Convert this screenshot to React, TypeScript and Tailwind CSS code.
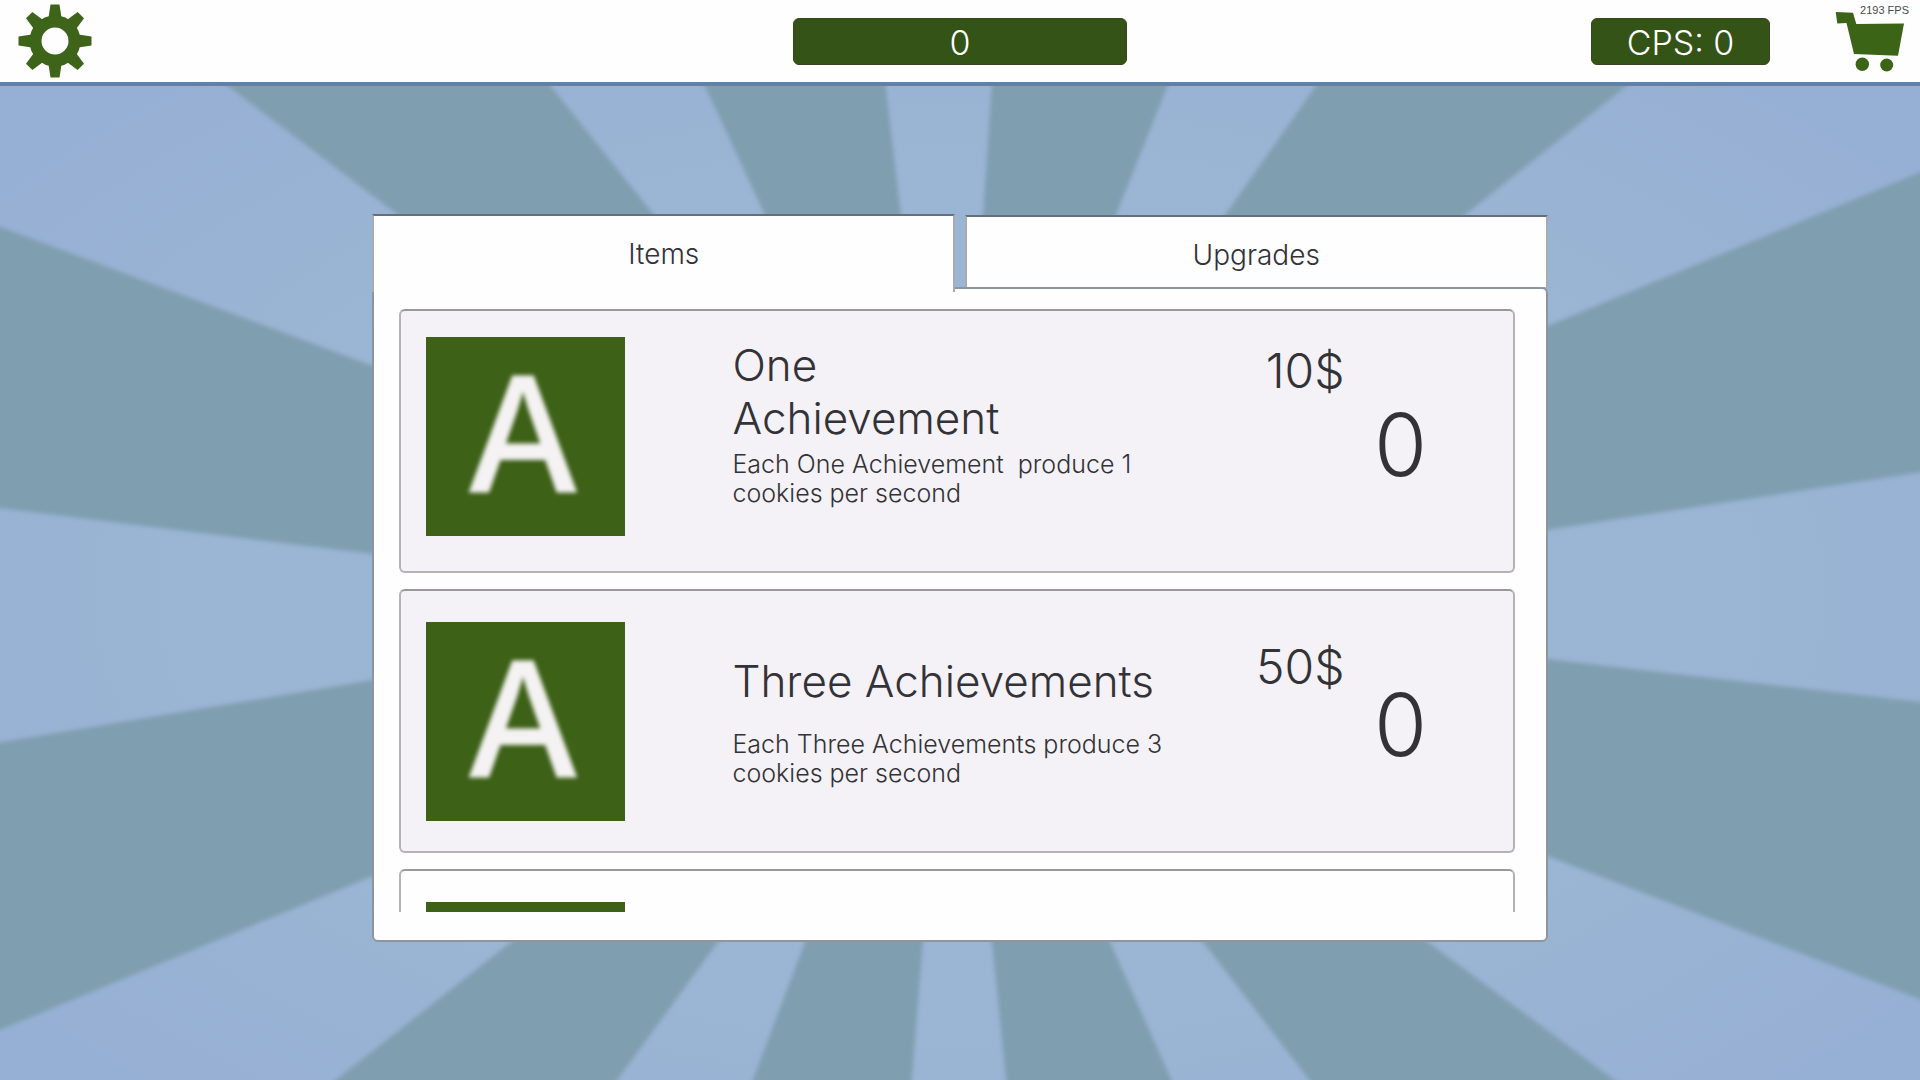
import { useState } from 'react';
import clsx from 'clsx';

type Tab = 'items' | 'upgrades';

interface Item {
  title: string;
  description: string;
  price: number;
  owned: number;
  unlocked: boolean;
  iconClass: string;
  titleClass: string;
  priceClass: string;
}

const items: Item[] = [
  {
    title: 'One\nAchievement',
    description: 'Each One Achievement  produce 1\ncookies per second',
    price: 10,
    owned: 0,
    unlocked: true,
    iconClass: 'mt-[26px]',
    titleClass: 'mt-7',
    priceClass: 'mt-7',
  },
  {
    title: 'Three Achievements',
    description: 'Each Three Achievements produce 3\ncookies per second',
    price: 50,
    owned: 0,
    unlocked: true,
    iconClass: 'mt-[31px]',
    titleClass: 'mt-16',
    priceClass: 'mt-11',
  },
  {
    title: '',
    description: '',
    price: 0,
    owned: 0,
    unlocked: false,
    iconClass: 'mt-[31px]',
    titleClass: 'mt-16',
    priceClass: 'mt-11',
  },
];

// each ray starts at the window edge and ends behind the panel
const rays = [
  '220,80 546,80 654,215 955,640 398,215',
  '702,80 885,80 901,215 950,640 765,215',
  '992,80 1170,80 1116,215 975,640 983,215',
  '1320,80 1634,80 1465,215 970,640 1225,215',
  '-10,223 -10,507 373,554 955,640 373,366',
  '-10,744 -10,1034 373,876 955,640 373,680',
  '1930,168 1930,471 1547,530 955,640 1547,326',
  '1930,703 1930,1003 1547,856 955,640 1547,659',
  '323,1090 610,1090 718,942 955,640 511,942',
  '749,1090 911,1090 923,942 955,640 805,942',
  '1007,1090 1176,1090 1110,942 955,640 992,942',
  '1317,1090 1628,1090 1428,942 955,640 1203,942',
];

function Background() {
  return (
    <svg
      className="absolute inset-0 h-full w-full"
      viewBox="0 0 1920 1080"
      preserveAspectRatio="none"
      aria-hidden="true"
    >
      <defs>
        <radialGradient id="sky" cx="50%" cy="55%" r="65%">
          <stop offset="0%" stopColor="#99b4d2" />
          <stop offset="60%" stopColor="#9bb5d4" />
          <stop offset="100%" stopColor="#96afd4" />
        </radialGradient>
        <filter id="soft">
          <feGaussianBlur stdDeviation="2" />
        </filter>
      </defs>
      <rect width="1920" height="1080" fill="url(#sky)" />
      <g fill="#7f9fb0" filter="url(#soft)">
        {rays.map((points) => (
          <polygon key={points} points={points} />
        ))}
      </g>
    </svg>
  );
}

function GearIcon() {
  return (
    <svg className="h-[78px] w-[78px]" viewBox="-39 -39 78 78" fill="#3d6418" aria-hidden="true">
      {[0, 45, 90, 135, 180, 225, 270, 315].map((angle) => (
        <path key={angle} d="M-7 -20 L-4.5 -36.5 H4.5 L7 -20 Z" transform={`rotate(${angle})`} />
      ))}
      <circle r="19.5" fill="none" stroke="#3d6418" strokeWidth="12" />
    </svg>
  );
}

function CartIcon() {
  return (
    <svg className="h-[60px] w-[70px]" viewBox="0 0 70 60" fill="#3b6417" aria-hidden="true">
      <path d="M1.7 0 L19 0.7 L22.3 12 L70 11.5 L64 43.7 L20 42 L12.5 11 L3.3 11.5 Z" />
      <circle cx="28.3" cy="52.3" r="6.7" />
      <circle cx="52.7" cy="53" r="6.5" />
    </svg>
  );
}

function Header() {
  return (
    <header className="relative grid h-[86px] grid-cols-[1fr_auto_1fr] items-center border-b-4 border-[#5f82ab] bg-[#fefefe] px-4">
      <button type="button" aria-label="Settings" className="justify-self-start">
        <GearIcon />
      </button>
      <div className="flex h-[47px] w-[334px] items-center justify-center rounded-md border border-[#3b4420] bg-[#345317] pt-0.5 text-[34px] text-white">
        0
      </div>
      <div className="flex items-center justify-end">
        <div className="mr-16 flex h-[47px] w-[179px] items-center justify-center rounded-md border border-[#3b4420] bg-[#345317] pt-0.5 text-[34px] text-white">
          CPS: 0
        </div>
        <button type="button" aria-label="Shop" className="pt-0.5">
          <CartIcon />
        </button>
      </div>
      <span className="absolute right-[11px] top-1 font-['Liberation_Sans',sans-serif] text-[11px] font-normal leading-3 text-[#4a4a4a]">
        2193 FPS
      </span>
    </header>
  );
}

function ItemCard({ item }: { item: Item }) {
  return (
    <li
      className={clsx(
        'flex h-[264px] shrink-0 items-start rounded-md border-2 border-[#b4b2b6] border-t-[#9a989c] pl-[25px] pr-20',
        item.unlocked ? 'bg-[#f4f2f6]' : 'bg-[#fefefe]',
      )}
    >
      <div
        className={clsx(
          "flex h-[199px] w-[199px] shrink-0 items-center justify-center bg-[#3d6117] pb-4 pr-1.5 font-['Open_Sans',sans-serif] text-[164px] font-semibold leading-none text-[#f4f2f2]",
          item.iconClass,
        )}
      >
        {item.unlocked && <span className="blur-[2px]">A</span>}
      </div>
      {item.unlocked && (
        <>
          <div className="ml-[107px] flex flex-1 flex-col self-stretch pb-[63px]">
            <h2 className={clsx('whitespace-pre-line text-[44px] leading-[53px]', item.titleClass)}>{item.title}</h2>
            <p className="mt-auto whitespace-pre text-[25px] leading-[29px]">{item.description}</p>
          </div>
          <p className={clsx('w-32 text-right text-5xl leading-[64px]', item.priceClass)}>{item.price}$</p>
          <p className="ml-6 mt-[86px] w-16 text-center text-[86px] leading-[96px]">{item.owned}</p>
        </>
      )}
    </li>
  );
}

export default function App() {
  const [tab, setTab] = useState<Tab>('items');

  const tabClass = (name: Tab) =>
    clsx(
      'border-2 border-[#a9abb2] border-t-[#66707c] border-b-0 bg-[#fefefe] text-[28px]',
      tab === name ? 'relative z-10 -mb-[5px] h-[78px]' : 'mt-px h-[72px] pt-1.5',
    );

  return (
    <div className="relative flex h-screen flex-col overflow-hidden font-['Inter',sans-serif] font-light text-[#333236]">
      <Background />
      <Header />
      <main className="relative mx-auto flex min-h-0 w-[61.2%] flex-1 flex-col pb-[138px] pt-32">
        <div role="tablist" className="grid grid-cols-2 items-start gap-2.5">
          <button type="button" role="tab" aria-selected={tab === 'items'} className={tabClass('items')} onClick={() => setTab('items')}>
            Items
          </button>
          <button type="button" role="tab" aria-selected={tab === 'upgrades'} className={tabClass('upgrades')} onClick={() => setTab('upgrades')}>
            Upgrades
          </button>
        </div>
        <div className="min-h-0 flex-1 rounded-md rounded-tl-none border-2 border-[#8f959c] bg-[#fefefe] pb-7 pl-[25px] pr-[31px] pt-5">
          <ul className="flex h-full flex-col gap-4 overflow-y-auto [scrollbar-width:none]">
            {tab === 'items' && items.map((item, index) => <ItemCard key={index} item={item} />)}
          </ul>
        </div>
      </main>
    </div>
  );
}
